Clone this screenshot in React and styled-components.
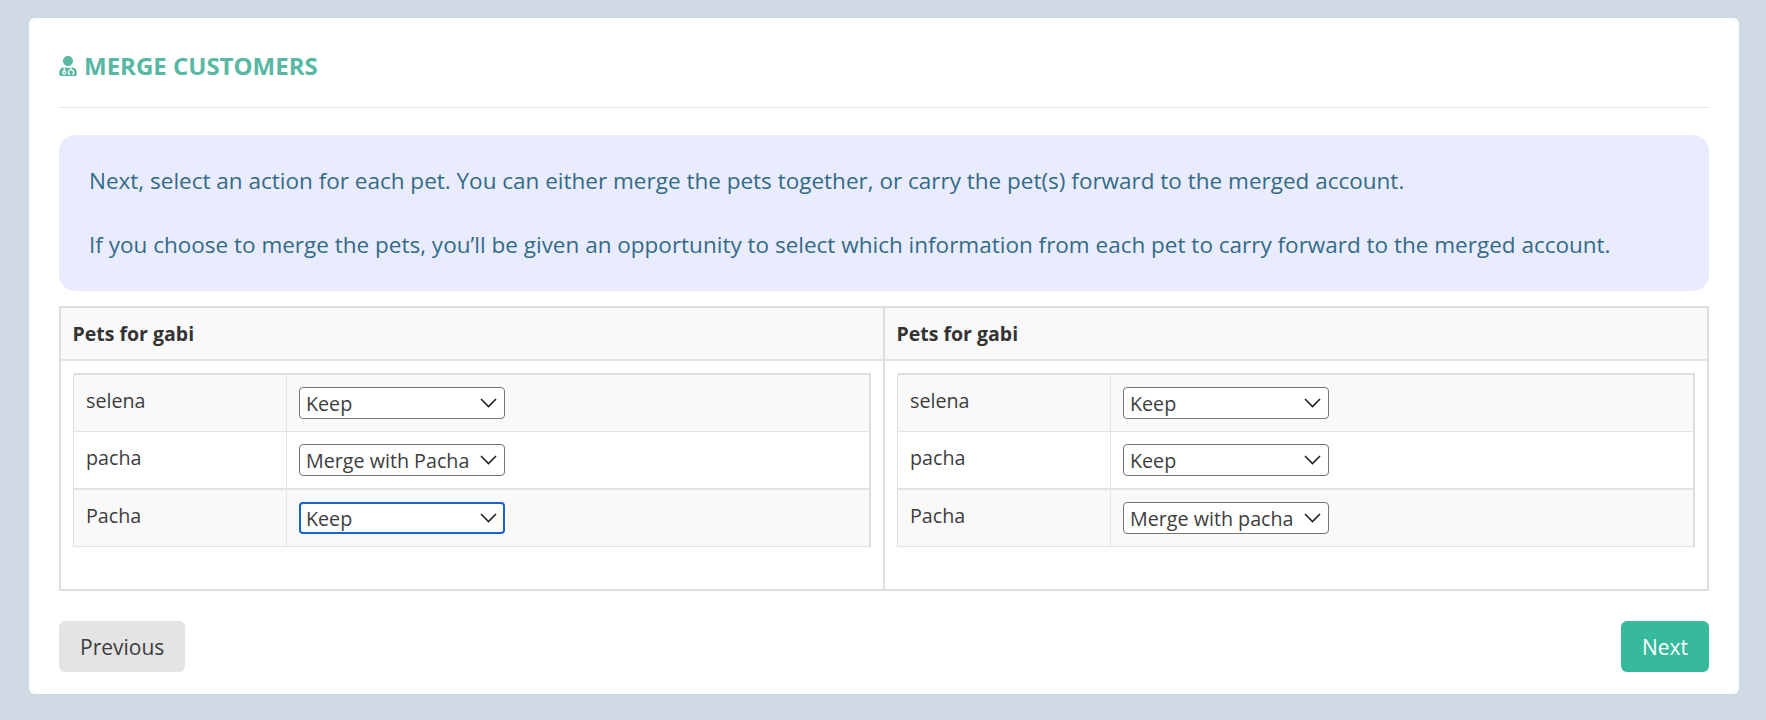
import React from "react";
import styled, { createGlobalStyle } from "styled-components";
import { FaUserMd } from "react-icons/fa";

const GlobalStyle = createGlobalStyle`
  html, body {
    margin: 0;
    padding: 0;
    background: #cfd9e3;
    font-family: "Open Sans", sans-serif;
    color: #3d3d3d;
  }
  * {
    box-sizing: border-box;
  }
`;

const Page = styled.div`
  width: 1766px;
  height: 720px;
  padding: 18px 27px 26px 29px;
`;

const Card = styled.div`
  background: #fff;
  border-radius: 6px;
  height: 676px;
  padding: 0 30px;
`;

const Header = styled.div`
  height: 90px;
  display: flex;
  align-items: center;
  border-bottom: 1px solid #e8eaec;
  padding-top: 6px;
`;

const Title = styled.h1`
  margin: 0;
  display: flex;
  align-items: center;
  gap: 7px;
  font-size: 24px;
  font-weight: 700;
  color: #57b8a3;
  text-transform: uppercase;
`;

const TitleIcon = styled(FaUserMd)`
  width: 18px;
  height: 20px;
`;

const Notice = styled.div`
  margin-top: 27px;
  height: 156px;
  padding: 30px;
  background: #e9ecfe;
  border-radius: 16px;
  color: #336b87;
  font-size: 22.5px;
  line-height: 32px;
`;

const NoticeLine = styled.p`
  margin: 0 0 32px;
  white-space: nowrap;
  &:last-child {
    margin-bottom: 0;
  }
`;

const Columns = styled.div`
  margin-top: 15px;
  display: grid;
  grid-template-columns: 822px 1fr;
  height: 285px;
  border: 2px solid #dedede;
`;

const Column = styled.div`
  min-width: 0;
  & + & {
    border-left: 2px solid #dedede;
  }
`;

const ColumnHead = styled.div`
  height: 53px;
  padding: 0 12px 1px 11.5px;
  display: flex;
  align-items: center;
  background: #f9f9f9;
  border-bottom: 2px solid #e4e4e4;
  font-size: 19.5px;
  font-weight: 700;
  color: #333;
`;

const ColumnBody = styled.div`
  padding: 12px;
`;

const PetTable = styled.table`
  width: 100%;
  border-collapse: collapse;
  table-layout: fixed;
  border: 1px solid #dedede;
  border-top-width: 2px;
  border-right-width: 2px;
  font-size: 19.7px;
`;

const PetRow = styled.tr`
  height: 57px;
  background: ${props => (props.$shaded ? "#f9f9f9" : "#fff")};
  border-bottom: 1px solid #e2e2e2;
  &:nth-child(2) {
    height: 58px;
    border-bottom-width: 2px;
  }
`;

const NameCell = styled.td`
  width: 213px;
  padding: 0 12px 4px;
  border-right: 1px solid #e4e4e4;
`;

const ActionCell = styled.td`
  padding: 0 12px;
`;

const SelectWrap = styled.div`
  position: relative;
  width: 206px;
  height: 32px;
`;

const Select = styled.select`
  appearance: none;
  display: block;
  width: 100%;
  height: 100%;
  padding: 1px 24px 0 ${props => (props.$focused ? "5px" : "6px")};
  background: #fff;
  border: ${props => (props.$focused ? "2px solid #1a62cf" : "1px solid #767676")};
  border-radius: 4px;
  font-family: "Open Sans", sans-serif;
  font-size: 19.7px;
  color: #3d3d3d;
  outline: none;
`;

const Chevron = styled.svg`
  position: absolute;
  top: 11px;
  right: 8px;
  width: 17px;
  height: 10px;
  pointer-events: none;
`;

const Footer = styled.div`
  margin-top: 30px;
  display: flex;
  justify-content: space-between;
`;

const Button = styled.button`
  height: 51px;
  padding: 0 21px;
  border: none;
  border-radius: 6px;
  font-family: "Open Sans", sans-serif;
  font-size: 21px;
  background: ${props => (props.$primary ? "#36ba9b" : "#e4e4e4")};
  color: ${props => (props.$primary ? "#fff" : "#3d3d3d")};
`;

const OPTIONS = {
  keep: "Keep",
  mergeUpper: "Merge with Pacha",
  mergeLower: "Merge with pacha",
};

const columns = [
  [
    { name: "selena", value: "keep" },
    { name: "pacha", value: "mergeUpper" },
    { name: "Pacha", value: "keep", focused: true },
  ],
  [
    { name: "selena", value: "keep" },
    { name: "pacha", value: "keep" },
    { name: "Pacha", value: "mergeLower" },
  ],
];

const App = () => {
  return (
    <Page>
      <GlobalStyle />
      <Card>
        <Header>
          <Title>
            <TitleIcon />
            Merge Customers
          </Title>
        </Header>
        <Notice>
          <NoticeLine>
            Next, select an action for each pet. You can either merge the pets together, or carry the pet(s) forward to the merged account.
          </NoticeLine>
          <NoticeLine>
            If you choose to merge the pets, you’ll be given an opportunity to select which information from each pet to carry forward to the merged account.
          </NoticeLine>
        </Notice>
        <Columns>
          {columns.map((pets, i) => (
            <Column key={i}>
              <ColumnHead>Pets for gabi</ColumnHead>
              <ColumnBody>
                <PetTable>
                  <tbody>
                    {pets.map((pet, j) => (
                      <PetRow key={j} $shaded={j !== 1}>
                        <NameCell>{pet.name}</NameCell>
                        <ActionCell>
                          <SelectWrap>
                            <Select defaultValue={pet.value} $focused={pet.focused}>
                              {Object.entries(OPTIONS).map(([value, label]) => (
                                <option key={value} value={value}>
                                  {label}
                                </option>
                              ))}
                            </Select>
                            <Chevron viewBox="0 0 17 10" fill="none" stroke="#222" strokeWidth="1.6">
                              <path d="M1 1l7.5 7.5L16 1" />
                            </Chevron>
                          </SelectWrap>
                        </ActionCell>
                      </PetRow>
                    ))}
                  </tbody>
                </PetTable>
              </ColumnBody>
            </Column>
          ))}
        </Columns>
        <Footer>
          <Button>Previous</Button>
          <Button $primary>Next</Button>
        </Footer>
      </Card>
    </Page>
  );
};

export default App;
